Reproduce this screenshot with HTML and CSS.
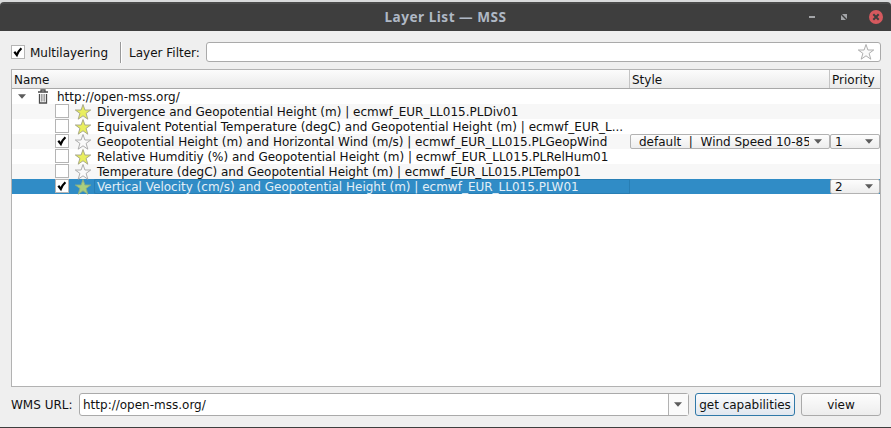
FILE: index.html
```
<!DOCTYPE html>
<html lang="en">
<head>
<meta charset="utf-8">
<title>Layer List — MSS</title>
<link rel="stylesheet" href="styles.css">
</head>
<body>
<svg class="defs" width="0" height="0">
  <symbol id="star" viewBox="0 0 16 16"><path d="M8 .5 9.9 6H15.7L11.1 9.4 12.8 15.2 8 11.8 3.2 15.2 4.9 9.4 .3 6H6.1Z"/></symbol>
  <symbol id="check" viewBox="0 0 14 14"><path d="M3.3 6.8 5.8 10Q7.2 6.2 10.4 3.2" fill="none" stroke="#000" stroke-width="2.2"/></symbol>
  <symbol id="arrow" viewBox="0 0 8 5"><path d="M0 .3H8L4 4.7Z" fill="#5b5b5b"/></symbol>
</svg>
<div class="window">
  <header class="titlebar">
    <h1 class="title">Layer List — MSS</h1>
    <div class="controls">
      <svg width="76" height="16" viewBox="0 0 76 16">
        <path d="M1 8H7" stroke="#a3a5a8" stroke-width="2"/>
        <path d="M34 5H39V10ZM33 6V11H38Z" fill="#a3a5a8"/>
        <circle cx="68" cy="8" r="7" fill="#d5595e"/>
        <path d="M65.3 5.3 70.7 10.7M70.7 5.3 65.3 10.7" stroke="#3e3e3e" stroke-width="2"/>
      </svg>
    </div>
  </header>
  <main class="content">
    <div class="toolbar">
      <span class="box"><svg><use href="#check"/></svg></span>
      <span class="multi">Multilayering</span>
      <span class="separator"></span>
      <span class="filter-label">Layer Filter:</span>
      <div class="filter"><svg class="star empty"><use href="#star"/></svg></div>
    </div>
    <div class="tree">
      <div class="row head"><div>Name</div><div>Style</div><div>Priority</div></div>
      <div class="row root"><div class="name">
        <svg class="arrow"><use href="#arrow"/></svg>
        <svg class="trash" viewBox="0 0 12 15"><path d="M1 3H11M4 2.5V1H8V2.5M2.5 5V14H9.5V5" fill="none" stroke="#4c4c4c" stroke-width="1.3"/><path d="M4 5H8V12.5H4Z" fill="#c4c4c4"/><path d="M4.5 5V12.5M7.5 5V12.5" stroke="#999" stroke-width=".8"/></svg>
        <span class="text">http://open-mss.org/</span></div></div>
      <div class="row"><div class="name"><span class="box"></span><svg class="star"><use href="#star"/></svg><span class="label">Divergence and Geopotential Height (m) | ecmwf_EUR_LL015.PLDiv01</span></div></div>
      <div class="row"><div class="name"><span class="box"></span><svg class="star"><use href="#star"/></svg><span class="label">Equivalent Potential Temperature (degC) and Geopotential Height (m) | ecmwf_EUR_L...</span></div></div>
      <div class="row"><div class="name"><span class="box"><svg><use href="#check"/></svg></span><svg class="star empty"><use href="#star"/></svg><span class="label">Geopotential Height (m) and Horizontal Wind (m/s) | ecmwf_EUR_LL015.PLGeopWind</span></div>
        <div class="combo style"><span class="value">default &nbsp;| &nbsp;Wind Speed 10-85</span><svg class="arrow"><use href="#arrow"/></svg></div>
        <div class="combo priority"><span class="value">1</span><svg class="arrow"><use href="#arrow"/></svg></div></div>
      <div class="row"><div class="name"><span class="box"></span><svg class="star"><use href="#star"/></svg><span class="label">Relative Humditiy (%) and Geopotential Height (m) | ecmwf_EUR_LL015.PLRelHum01</span></div></div>
      <div class="row"><div class="name"><span class="box"></span><svg class="star empty"><use href="#star"/></svg><span class="label">Temperature (degC) and Geopotential Height (m) | ecmwf_EUR_LL015.PLTemp01</span></div></div>
      <div class="row selected"><div class="name"><span class="box"><svg><use href="#check"/></svg></span><svg class="star"><use href="#star"/></svg><span class="label">Vertical Velocity (cm/s) and Geopotential Height (m) | ecmwf_EUR_LL015.PLW01</span></div>
        <div></div>
        <div class="combo priority"><span class="value">2</span><svg class="arrow"><use href="#arrow"/></svg></div></div>
    </div>
    <div class="footer">
      <span class="url-label">WMS URL:</span>
      <div class="url"><span class="text">http://open-mss.org/</span><div class="drop"><svg class="arrow"><use href="#arrow"/></svg></div></div>
      <button class="button primary">get capabilities</button>
      <button class="button view">view</button>
    </div>
  </main>
</div>
</body>
</html>
```
FILE: styles.css
```
* { box-sizing: border-box; }
body { margin: 0; background: #d9dadb; font: 12px/15px "DejaVu Sans", sans-serif; color: #111; overflow: hidden; }
svg { display: block; flex: none; }
.defs { position: absolute; }
.window { height: 428px; padding-top: 2px; display: flex; flex-direction: column; }
.titlebar { height: 29px; flex: none; display: grid; grid-template-columns: 1fr auto 1fr; align-items: center; background: #3e3e3e; border-top: 2px solid #4b4b4b; border-radius: 4px 4px 0 0; }
.title { grid-column: 2; margin: 0; padding-bottom: 2px; font: 700 13.6px/18px "Noto Sans", sans-serif; color: #afb8c5; letter-spacing: .5px; }
.controls { justify-self: end; padding: 0 7px 1px 0; }
.content { flex: 1; padding: 10px 10px 0 11px; background: #efefef; border-bottom: 1px solid #3e3e3e; }
.toolbar { height: 22px; display: flex; align-items: center; }
.box { width: 14px; height: 14px; flex: none; border: 1px solid #b5b5b5; background: #fff; }
.box svg { width: 14px; height: 14px; margin: -1px; }
.multi { width: 90px; margin-left: 5px; }
.multi, .filter-label, .url-label { padding-top: 2px; }
.separator { width: 2px; height: 21px; margin-right: 7px; border-left: 1px solid #999; border-right: 1px solid #fff; }
.filter-label { width: 76px; white-space: nowrap; }
.filter { margin-left: 1px; width: 675px; height: 20px; display: flex; align-items: center; justify-content: flex-end; padding-right: 6px; border: 1px solid #aaa; border-radius: 3px; background: #fff; }
.star { width: 16px; height: 16px; fill: #e9ee5e; stroke: #a2a286; stroke-width: .9; overflow: visible; }
.star.empty { fill: #fafafa; stroke: #a5a5a5; }
.tree { height: 318px; margin-top: 6px; background: #fff; border: 1px solid #b2b2b2; }
.row { display: grid; grid-template: 100% / 618px 200px 50px; height: 15px; white-space: nowrap; }
.row:nth-child(odd) { background: #f7f7f7; }
.row.head { height: 19px; line-height: 20px; background: linear-gradient(#fcfcfc, #eaeaea); border-bottom: 1px solid #a8a8a8; }
.head > div { padding-left: 2px; border-right: 1px solid #c4c4c4; }
.head > div:last-child { border-right: 0; }
.name { display: flex; align-items: flex-start; padding-left: 43px; height: 15px; }
.name .star { margin-left: 6px; }
.label { padding: 1px 0 0 6px; }
.arrow { width: 8px; height: 5px; }
.root .name { padding-left: 6px; }
.root .arrow { margin-top: 5px; }
.trash { width: 12px; height: 15px; margin: 0 8px 0 11px; }
.text { padding-top: 1px; }
.row.selected { background: #308cc6; color: #e3eff7; }
.row.selected .star { fill: #abcf7d; stroke: #8cae83; }
.selected .name { border-right: 1px solid #287eb4; }
.selected .label { flex: 1; height: 15px; margin-left: 3px; padding: 0 0 0 2px; border: 1px solid #287eb4; border-right: 0; border-radius: 2px 0 0 2px; }
.combo { height: 15px; display: flex; align-items: center; justify-content: space-between; overflow: hidden; border: 1px solid #b2b2b2; border-radius: 2px; background: linear-gradient(#fdfdfd, #ededed); color: #111; line-height: 13px; }
.value { padding-top: 2px; }
.combo.style { padding: 0 7px 0 8px; }
.combo.style .value { width: 170px; overflow: hidden; }
.combo.priority { padding: 0 6px 0 4px; }
.footer { height: 23px; margin-top: 6px; display: flex; align-items: center; }
.url-label { width: 68px; white-space: nowrap; }
.url { width: 610px; height: 23px; display: flex; align-items: center; justify-content: space-between; padding-left: 3px; border: 1px solid #aaa; border-radius: 3px; background: #fff; }
.drop { width: 20px; height: 21px; display: flex; align-items: center; justify-content: center; padding-right: 2px; border-left: 1px solid #b2b2b2; background: #fafafa; }
.button { width: 80px; height: 23px; padding: 2px 0 0; font: inherit; color: #111; border: 1px solid #aaa; border-radius: 3px; background: linear-gradient(#fdfdfd, #ededed); white-space: nowrap; }
.button.primary { width: 100px; margin: 0 6px; border-color: #3079a8; background: linear-gradient(#fafbfd, #e1e7ef); }
```
